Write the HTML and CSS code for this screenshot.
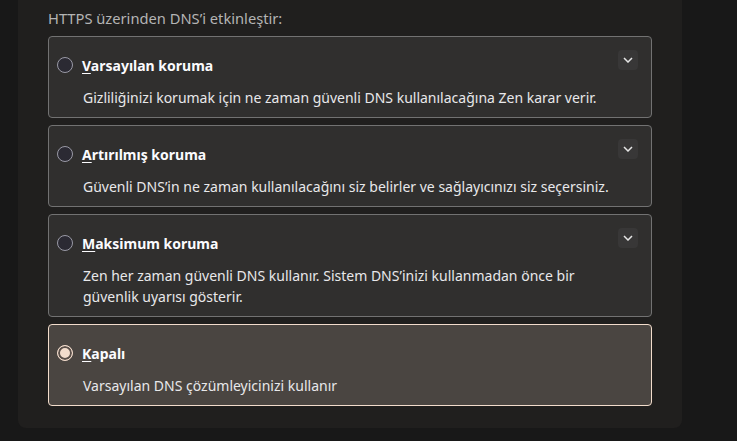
FILE: index.html
```html
<!DOCTYPE html>
<html lang="tr">
<head>
<meta charset="utf-8">
<link rel="stylesheet" href="styles.css">
</head>
<body>
<div class="panel">
  <div class="heading">HTTPS üzerinden DNS’i etkinleştir:</div>
  <div class="options">
    <div class="card">
      <div class="title-row"><span class="radio"></span><span class="title"><u>V</u>arsayılan koruma</span></div>
      <div class="desc">Gizliliğinizi korumak için ne zaman güvenli DNS kullanılacağına Zen karar verir.</div>
      <button class="expand"><svg width="10" height="6" viewBox="0 0 10 6"><path d="M1 1 L5 5 L9 1" fill="none" stroke="#e6e6e6" stroke-width="1.5"/></svg></button>
    </div>
    <div class="card">
      <div class="title-row"><span class="radio"></span><span class="title"><u>A</u>rtırılmış koruma</span></div>
      <div class="desc">Güvenli DNS’in ne zaman kullanılacağını siz belirler ve sağlayıcınızı siz seçersiniz.</div>
      <button class="expand"><svg width="10" height="6" viewBox="0 0 10 6"><path d="M1 1 L5 5 L9 1" fill="none" stroke="#e6e6e6" stroke-width="1.5"/></svg></button>
    </div>
    <div class="card">
      <div class="title-row"><span class="radio"></span><span class="title"><u>M</u>aksimum koruma</span></div>
      <div class="desc">Zen her zaman güvenli DNS kullanır. Sistem DNS’inizi kullanmadan önce bir güvenlik uyarısı gösterir.</div>
      <button class="expand"><svg width="10" height="6" viewBox="0 0 10 6"><path d="M1 1 L5 5 L9 1" fill="none" stroke="#e6e6e6" stroke-width="1.5"/></svg></button>
    </div>
    <div class="card selected">
      <div class="title-row"><span class="radio checked"></span><span class="title"><u>K</u>apalı</span></div>
      <div class="desc">Varsayılan DNS çözümleyicinizi kullanır</div>
    </div>
  </div>
</div>
</body>
</html>
```
FILE: styles.css
```css
html, body {
  margin: 0;
  padding: 0;
  background: #181818;
  height: 441px;
  overflow: hidden;
  font-family: "Noto Sans", "Open Sans", sans-serif;
}
.panel {
  margin-left: 18px;
  width: 604px;
  padding: 7px 30px 22px 30px;
  background: #201f1e;
  border-radius: 0 0 8px 8px;
}
.heading {
  color: #b4b4b4;
  font-size: 14.7px;
  line-height: 22px;
  margin-bottom: 7px;
}
.options {
  display: flex;
  flex-direction: column;
  gap: 7px;
}
.card {
  position: relative;
  background: #302f2e;
  border: 1px solid #727272;
  border-radius: 4px;
  padding: 18px 8px 9px 8px;
}
.card.selected {
  background: #4a4541;
  border-color: #f2dccc;
}
.title-row {
  display: flex;
  align-items: center;
  height: 20px;
  gap: 9px;
}
.radio {
  width: 14px;
  height: 14px;
  border-radius: 50%;
  border: 1px solid #9a9aa6;
  background: #2b2a33;
  flex: none;
}
.radio.checked {
  border: 1px solid #f3dccc;
  background: #f3dccc;
  box-shadow: inset 0 0 0 2px #5a4f49, inset 0 0 0 3px #f3dccc;
}
.title {
  color: #fbfbfe;
  font-weight: bold;
  font-size: 14px;
}
.title u {
  text-decoration-thickness: 1px;
  text-underline-offset: 2px;
}
.desc {
  margin-top: 12px;
  margin-left: 26px;
  max-width: 540px;
  color: #e8e8ea;
  font-size: 14px;
  line-height: 21px;
}
.expand {
  position: absolute;
  top: 13px;
  right: 13px;
  width: 20px;
  height: 20px;
  padding: 0;
  border: none;
  border-radius: 4px;
  background: #383737;
  display: flex;
  align-items: center;
  justify-content: center;
}
```
